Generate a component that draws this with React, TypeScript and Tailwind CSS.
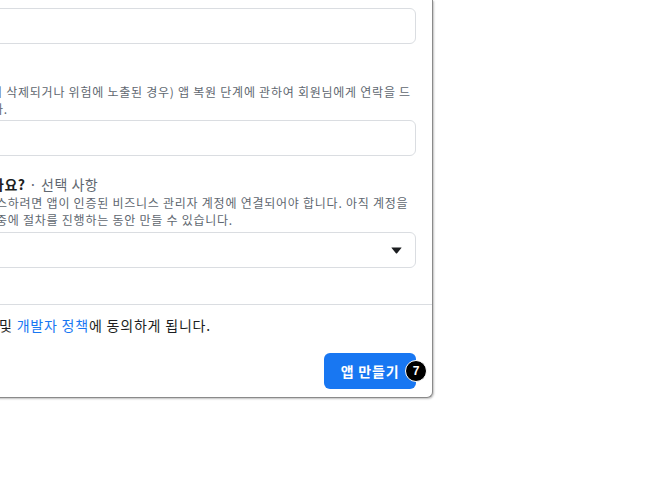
import React from "react";

const font = { fontFamily: '"Noto Sans CJK KR", "Noto Sans", sans-serif' };

export default function App() {
  return (
    <div className="w-[662px] h-[485px] bg-white overflow-hidden relative" style={font}>
      <div className="ml-[-20px] w-[453px] h-[398px] bg-white border-r border-b border-[#8a8a8a] rounded-br-[6px] shadow-[1px_1px_2px_rgba(0,0,0,0.25)] flex flex-col overflow-hidden">
        <div className="flex flex-col pr-4">
          <div className="mt-[8px] h-[36px] rounded-[6px] border border-[#dadde1] bg-white" />
          <div className="mt-[39px] text-[12px] leading-[17px] tracking-[0.75px] text-[#606770] whitespace-nowrap">
            <div className="pl-[11px]">이 삭제되거나 위험에 노출된 경우) 앱 복원 단계에 관하여 회원님에게 연락을 드</div>
            <div className="pl-[12px]">다.</div>
          </div>
          <div className="mt-[3px] h-[36px] rounded-[6px] border border-[#dadde1] bg-white" />
          <div className="mt-[18px] pl-[11px] text-[14px] leading-[20px] tracking-[0.5px] whitespace-nowrap">
            <span className="font-bold text-[#1c1e21]">나요?</span>
            <span className="text-[#606770]"> · 선택 사항</span>
          </div>
          <div className="text-[12px] leading-[17px] tracking-[0.75px] text-[#606770] whitespace-nowrap">
            <div className="pl-[16px]">스하려면 앱이 인증된 비즈니스 관리자 계정에 연결되어야 합니다. 아직 계정을</div>
            <div className="pl-[16px]">중에 절차를 진행하는 동안 만들 수 있습니다.</div>
          </div>
          <div className="mt-[4px] h-[36px] rounded-[6px] border border-[#dadde1] bg-white flex items-center justify-end pr-[13px]">
            <svg width="11" height="7" viewBox="0 0 11 7">
              <path d="M0.8 0.5 H10.2 Q10.9 0.5 10.4 1.1 L6.1 6.2 Q5.5 6.8 4.9 6.2 L0.6 1.1 Q0.1 0.5 0.8 0.5 Z" fill="#1c1e21" />
            </svg>
          </div>
        </div>
        <div className="mt-[36px] border-t border-[#dadde1] flex flex-col pr-4">
          <div className="mt-[10px] pl-[19px] text-[14px] leading-[20px] tracking-[0.8px] text-[#1c1e21] whitespace-nowrap">
            및 <span className="text-[#1877f2]">개발자 정책</span>에 동의하게 됩니다.
          </div>
          <div className="mt-[18px] flex justify-end">
            <div className="relative">
              <button className="h-[36px] w-[92px] rounded-[6px] bg-[#1877f2] text-white text-[14px] tracking-[0.8px] font-bold flex items-center justify-center">
                앱 만들기
              </button>
              <div className="absolute right-[-11px] top-[7px] w-[22px] h-[22px] rounded-full bg-black border border-white flex items-center justify-center text-white text-[12px] font-bold leading-none" style={{ fontFamily: '"Liberation Sans", sans-serif' }}>
                7
              </div>
            </div>
          </div>
        </div>
      </div>
    </div>
  );
}
